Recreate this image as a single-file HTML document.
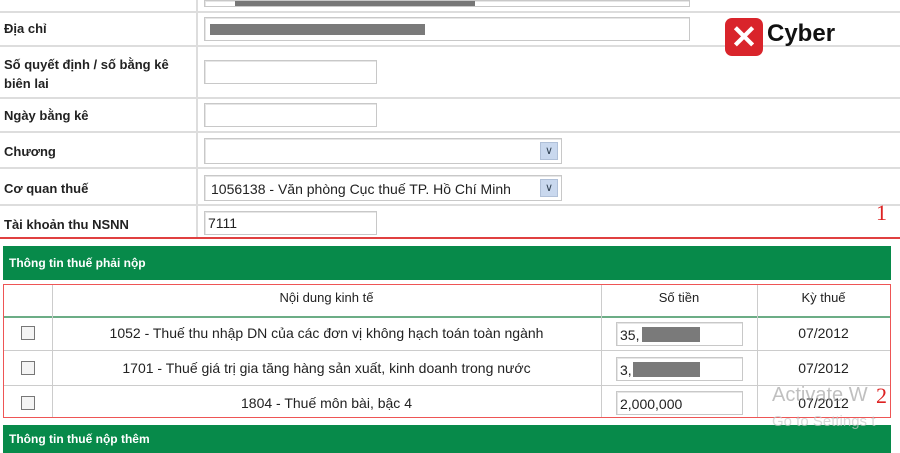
<!DOCTYPE html><html><head><meta charset="utf-8"><style>
*{margin:0;padding:0;box-sizing:border-box}
body{width:900px;height:450px;background:#fff;position:relative;overflow:hidden;font-family:"Liberation Sans",Arial,sans-serif;font-size:13px;color:#222}
.a{position:absolute}
.hl{position:absolute;left:0;width:900px;height:2px;background:#ddd}
.lb{position:absolute;left:4px;font-weight:bold;font-size:13px;color:#222}
.in{position:absolute;background:#fff;border:1px solid #c8c8c8;box-shadow:inset 1px 1px 0 #e6e6e6}
.g{position:absolute;background:#078a4a;color:#fff;font-size:12px;font-weight:bold;padding-left:6px}
.cb{position:absolute;left:21px;width:14px;height:14px;border:1px solid #777;background:#f4f4f4}
.c{position:absolute;text-align:center;font-size:14px}
.dd{position:absolute;width:18px;height:18px;background:#c9d8ee;border:1px solid #b0c0d8;color:#345;font-size:11px;text-align:center;line-height:16px}
</style></head><body>
<div class="hl" style="top:11px"></div>
<div class="hl" style="top:45px"></div>
<div class="hl" style="top:97px"></div>
<div class="hl" style="top:131px"></div>
<div class="hl" style="top:167px"></div>
<div class="hl" style="top:204px"></div>
<div class="a" style="left:196px;top:0;width:2px;height:238px;background:#ddd"></div>
<div class="in" style="left:204px;top:0;width:486px;height:7px"><div class="a" style="left:30px;top:0;width:240px;height:5px;background:#777"></div></div>
<div class="lb" style="top:21px">Địa chỉ</div>
<div class="in" style="left:204px;top:17px;width:486px;height:24px"><div class="a" style="left:5px;top:6px;width:215px;height:11px;background:#7a7a7a"></div></div>
<div class="lb" style="top:55px;line-height:19px">Số quyết định / số bằng kê<br>biên lai</div>
<div class="in" style="left:204px;top:60px;width:173px;height:24px"></div>
<div class="lb" style="top:108px">Ngày bằng kê</div>
<div class="in" style="left:204px;top:103px;width:173px;height:24px"></div>
<div class="lb" style="top:144px">Chương</div>
<div class="in" style="left:204px;top:138px;width:358px;height:26px"><div class="dd" style="right:3px;top:3px">&#8744;</div></div>
<div class="lb" style="top:181px">Cơ quan thuế</div>
<div class="in" style="left:204px;top:175px;width:358px;height:26px;font-size:14px;padding:5px 0 0 6px">1056138 - Văn phòng Cục thuế TP. Hồ Chí Minh<div class="dd" style="right:3px;top:3px">&#8744;</div></div>
<div class="lb" style="top:217px">Tài khoản thu NSNN</div>
<div class="in" style="left:204px;top:211px;width:173px;height:24px;font-size:14px;padding:3px 0 0 3px">7111</div>
<div class="a" style="left:876px;top:200px;color:#d22;font-family:'Liberation Serif',serif;font-size:22px">1</div>
<div class="a" style="left:0;top:237px;width:900px;height:2px;background:#e04040"></div>
<div class="a" style="left:725px;top:18px;width:38px;height:38px;background:#d9242b;border-radius:7px;color:#fff;font-size:32px;line-height:38px;text-align:center;font-weight:bold">✕</div>
<div class="a" style="left:767px;top:20px;font-size:24px;font-weight:bold;color:#111">Cyber</div>
<div class="g" style="left:3px;top:246px;width:888px;height:34px;line-height:34px">Thông tin thuế phải nộp</div>
<div class="a" style="left:3px;top:284px;width:888px;height:134px;border:1px solid #e55"></div>
<div class="a" style="left:4px;top:316px;width:886px;height:2px;background:#6cad86"></div>
<div class="a" style="left:4px;top:350px;width:886px;height:1px;background:#ccc"></div>
<div class="a" style="left:4px;top:385px;width:886px;height:1px;background:#ccc"></div>
<div class="a" style="left:52px;top:285px;width:1px;height:132px;background:#ccc"></div>
<div class="a" style="left:601px;top:285px;width:1px;height:132px;background:#ccc"></div>
<div class="a" style="left:757px;top:285px;width:1px;height:132px;background:#ccc"></div>
<div class="c" style="left:52px;top:290px;width:549px;font-size:13px">Nội dung kinh tế</div>
<div class="c" style="left:601px;top:290px;width:156px;font-size:13px">Số tiền</div>
<div class="c" style="left:757px;top:290px;width:133px;font-size:13px">Kỳ thuế</div>
<div class="cb" style="top:326px"></div><div class="cb" style="top:361px"></div><div class="cb" style="top:396px"></div>
<div class="c" style="left:52px;top:325px;width:549px">1052 - Thuế thu nhập DN của các đơn vị không hạch toán toàn ngành</div>
<div class="c" style="left:52px;top:360px;width:549px">1701 - Thuế giá trị gia tăng hàng sản xuất, kinh doanh trong nước</div>
<div class="c" style="left:52px;top:395px;width:549px">1804 - Thuế môn bài, bậc 4</div>
<div class="in" style="left:616px;top:322px;width:127px;height:24px;padding:4px 0 0 3px;font-size:14px">35,<div class="a" style="left:25px;top:4px;width:58px;height:15px;background:#7a7a7a"></div></div>
<div class="in" style="left:616px;top:357px;width:127px;height:24px;padding:4px 0 0 3px;font-size:14px">3,<div class="a" style="left:16px;top:4px;width:67px;height:15px;background:#7a7a7a"></div></div>
<div class="in" style="left:616px;top:391px;width:127px;height:24px;padding:4px 0 0 3px;font-size:14px">2,000,000</div>
<div class="c" style="left:757px;top:360px;width:133px">07/2012</div>
<div class="c" style="left:757px;top:325px;width:133px">07/2012</div>
<div class="c" style="left:757px;top:395px;width:133px">07/2012</div>
<div class="g" style="left:3px;top:425px;width:888px;height:28px;line-height:28px">Thông tin thuế nộp thêm</div>
<div class="a" style="left:772px;top:384px;font-size:20px;color:rgba(150,150,150,.6)">Activate W</div>
<div class="a" style="left:772px;top:413px;font-size:15px;color:rgba(200,200,200,.7)">Go to Settings t</div>
<div class="a" style="left:876px;top:383px;color:#d22;font-family:'Liberation Serif',serif;font-size:22px">2</div>
</body></html>
